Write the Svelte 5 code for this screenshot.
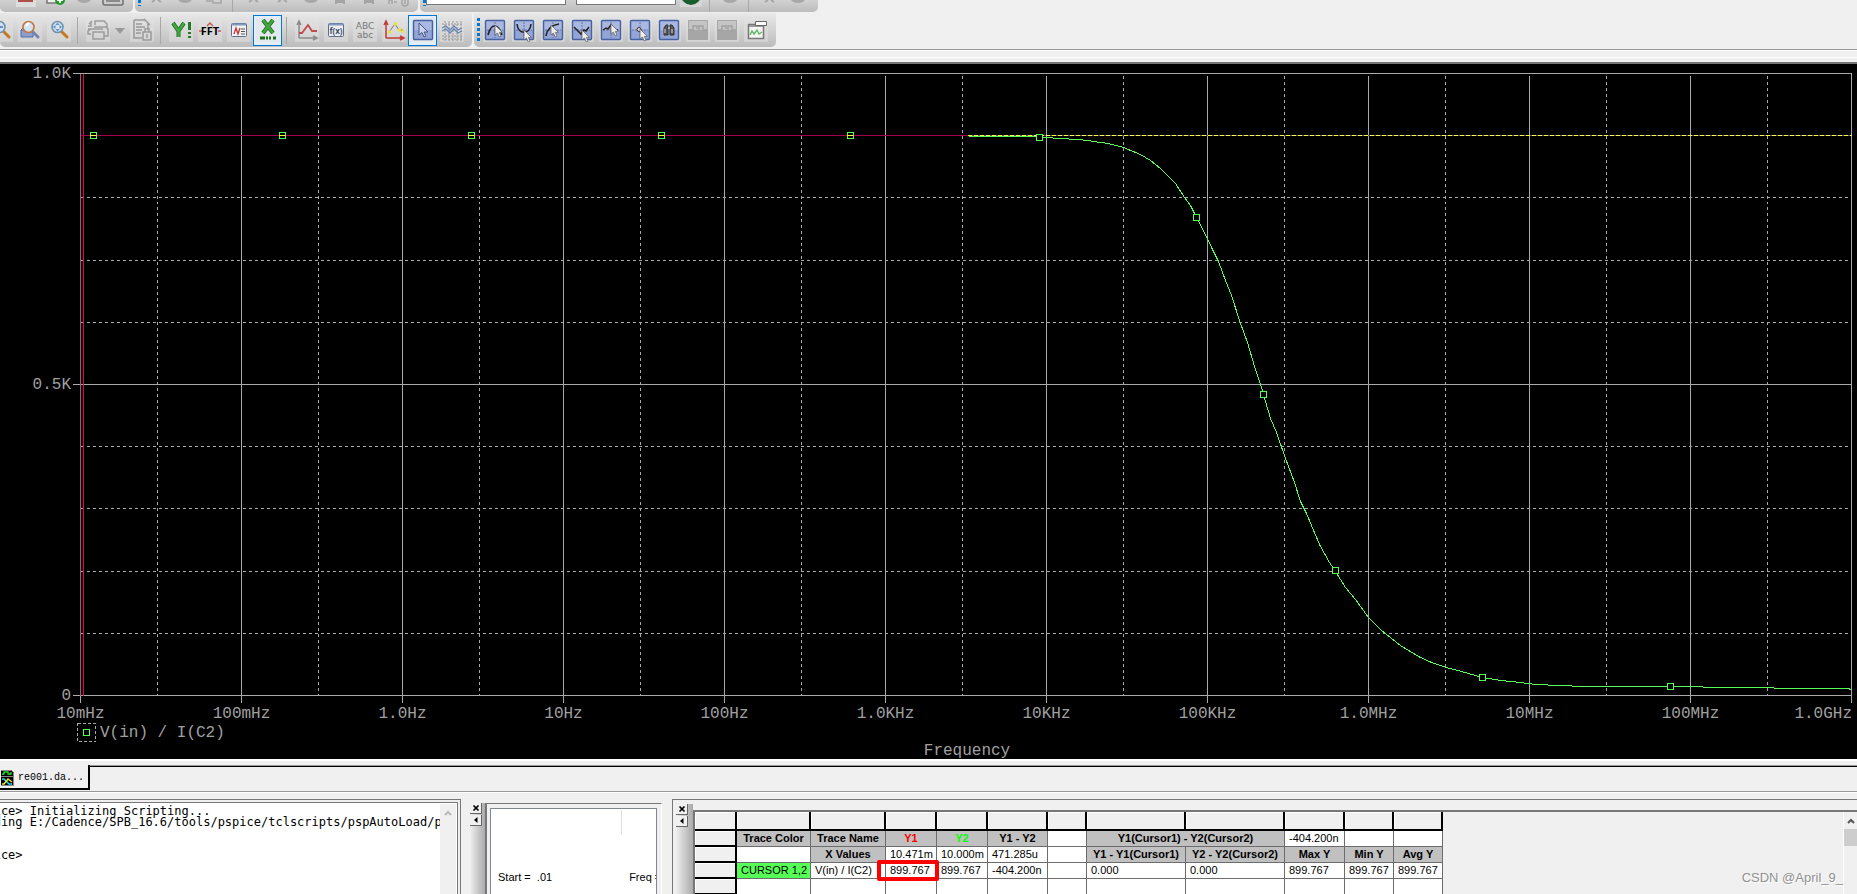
<script>
    // standard toolbar, only its lower edge is visible
    const fileTools = ['page', 'add', 'blob', 'device'];
    const editTools = ['bits', 'blob', 'pages', '|', 'bits', 'bits', 'blob', 'stamp', 'stamp', 'pair'];
    const runTools = ['run', '|', 'blob', '|', 'bits', 'blob'];

    const probeTools = [
        { icon: 'zoomout', label: 'Zoom out' },
        { icon: 'zoomarea', label: 'Zoom area' },
        { icon: 'zoomfit', label: 'Zoom fit' },
        { icon: '|' },
        { icon: 'print', label: 'Print', menu: true },
        { icon: 'report', label: 'Report' },
        { icon: '|' },
        { icon: 'logy', label: 'Log Y axis' },
        { icon: 'fft', label: 'Fourier' },
        { icon: 'perf', label: 'Performance analysis' },
        { icon: 'logx', label: 'Log X axis', active: true },
        { icon: '|' },
        { icon: 'trace', label: 'Add trace' },
        { icon: 'func', label: 'Evaluate measurement' },
        { icon: 'text', label: 'Text label' },
        { icon: 'points', label: 'Mark data points' },
        { icon: 'pointer', label: 'Toggle cursor', active: true },
        { icon: 'waves', label: 'Display waves' }
    ];
    const cursorTools = [
        { icon: 'peak', label: 'Cursor peak' },
        { icon: 'trough', label: 'Cursor trough' },
        { icon: 'slope', label: 'Cursor slope' },
        { icon: 'min', label: 'Cursor min' },
        { icon: 'max', label: 'Cursor max' },
        { icon: 'point', label: 'Cursor point' },
        { icon: 'search', label: 'Cursor search' },
        { icon: 'off', label: 'Next transition' },
        { icon: 'off', label: 'Previous transition' },
        { icon: 'mark', label: 'Mark label' }
    ];

    // plot geometry
    const left = 80.5, right = 1851.5, top = 73.5, bottom = 695.5;
    const decade = 161;
    const freqs = ['10mHz', '100mHz', '1.0Hz', '10Hz', '100Hz', '1.0KHz', '10KHz', '100KHz', '1.0MHz', '10MHz', '100MHz', '1.0GHz'];
    const minorY = [197.5, 260.5, 322.5, 446.5, 508.5, 571.5, 633.5];
    const curve = [
        [968, 136], [1034, 136], [1045, 137], [1060, 138], [1077, 139], [1087, 140], [1100, 142], [1108, 143], [1123, 147],
        [1140, 154], [1150, 160], [1160, 168], [1175, 183], [1184, 197], [1190, 205], [1196, 217], [1207, 238], [1212, 249],
        [1218, 261], [1225, 280], [1231, 295], [1240, 323], [1247, 342], [1254, 366], [1261, 387], [1263, 394], [1270, 418],
        [1276, 432], [1285, 458], [1294, 482], [1300, 501], [1306, 513], [1319, 544], [1329, 562], [1335, 571], [1345, 587],
        [1355, 599], [1368, 617], [1381, 630], [1400, 645], [1418, 656], [1431, 662], [1446, 667], [1461, 671], [1482, 677],
        [1501, 680], [1520, 682], [1535, 684], [1560, 685], [1583, 686], [1702, 686], [1703, 687], [1773, 687], [1774, 688],
        [1847, 688], [1851, 689]
    ];
    const markers = [
        [93, 135], [282, 135], [471, 135], [661, 135], [850, 135], [1039, 137],
        [1196, 217], [1263, 394], [1335, 570], [1482, 677], [1670, 686]
    ];
    const path = curve.map((p, i) => `${i === 0 ? 'M' : 'L'}${p[0] + 0.5},${p[1] + 0.5}`).join(' ');

    const colWidths = [42, 74, 75, 51, 51, 60, 39, 99, 99, 60, 49, 49];
</script>

{#snippet arrow(x, y)}
    <path transform="translate({x} {y})" d="M0 0V10L2.4 8L4.2 12L6 11.2L4.4 7.4H7.4Z" fill="#eee" stroke="#666" stroke-width=".8" />
{/snippet}

{#snippet tile()}
    <rect x="2.5" y="2.5" width="19" height="19" rx="1" fill="#93a4d6" stroke="#45619f" stroke-width="1.4" />
    <path d="M3.5 12V3.5H20.5V12Z" fill="#b9c4e8" opacity=".6" />
{/snippet}

{#snippet glyph(name)}
    <svg class="glyph" viewBox="0 0 24 24" aria-hidden="true">
        {#if name === 'zoomout' || name === 'zoomfit' || name === 'zoomarea'}
            {#if name === 'zoomarea'}
                <path d="M3 12H15V19H3Z" fill="#8c9fd3" stroke="#5068a8" />
                <path d="M3 12L6 9H9" fill="none" stroke="#5068a8" />
            {/if}
            <path d="M14 13L20 19" stroke={name === 'zoomarea' ? '#7684b4' : '#c87820'} stroke-width="3" stroke-linecap="round" />
            <circle cx="10.5" cy="9" r="5.5" fill="#d4e3f2" stroke={name === 'zoomarea' ? '#c07840' : '#7092ae'} stroke-width="1.6" />
            {#if name === 'zoomfit'}
                <path d="M10.5 4.500L12.500 7H8.500ZM10.500 13.500L12.500 11H8.500ZM6 9L8.500 7V11ZM15 9L12.500 7V11Z" fill="#5f93c7" />
            {:else if name === 'zoomarea'}
                <path d="M8 8L11 5" stroke="#fff" stroke-width="2" />
            {:else}
                <path d="M7 9H14" stroke="#5f93c7" stroke-width="2" />
            {/if}
        {:else if name === 'print'}
            <g fill="none" stroke="#9c9c9c" stroke-width="1.5">
                <path d="M2 8H5V4M3 6L6 3M9 7V3H18L21 6V9H8" />
                <path d="M20 9L22 11V18H18M5 11L2 13V16H5M5 11H17M7 14H18V21H7ZM2 11H5" />
            </g>
        {:else if name === 'report'}
            <g fill="none" stroke="#999" stroke-width="1.5">
                <path d="M4 2H15L18 5V11M4 2V20H12M6 6H12M6 9H15M6 12H12M6 15H11M14 1L20 7" />
                <path d="M13 14V22H21V14ZM15 14V11H19V14M17 16V20" />
            </g>
        {:else if name === 'logy'}
            <path d="M4 5L9.500 13V19M15 5L9.500 13" fill="none" stroke="#246a24" stroke-width="4" />
            <path d="M4 5L9.500 13V19M15 5L9.500 13" fill="none" stroke="#3fa83f" stroke-width="2.400" />
            <path d="M20.500 4V12M20.500 14V16M20.500 18V20" stroke="#257a25" stroke-width="3" />
        {:else if name === 'fft'}
            <path d="M1 13H4M20 13H23M9 8L12 5L15 8" fill="none" stroke="#c85a5a" stroke-width="1.500" />
            <text class="fft" x="12" y="17" text-anchor="middle">FFT</text>
        {:else if name === 'perf'}
            <rect x="4.500" y="5.500" width="15" height="13" rx="1" fill="#f2f2f2" stroke="#5c6f8e" />
            <path d="M5 6.500H19" stroke="#8298be" stroke-width="2" />
            <path d="M7 16L9 10L11 16L13 10" fill="none" stroke="#bd3434" stroke-width="1.300" />
            <path d="M14 11H18M14 13.500H18M14 16H18" stroke="#555" />
        {:else if name === 'logx'}
            <path d="M7 2L17 15M17 2L7 15" stroke="#246a24" stroke-width="4.200" />
            <path d="M7 2L17 15M17 2L7 15" stroke="#3fa83f" stroke-width="2.600" />
            <path d="M4 20H9M10 20H12M13 20H15M17 20H20" stroke="#1d6f1d" stroke-width="3" />
        {:else if name === 'trace' || name === 'points'}
            {#if name === 'trace'}
                <path d="M4 20V4M4 20H21M2 7L4 3L6 7M18 18L22 20L18 22" fill="none" stroke="#8a8a8a" stroke-width="1.500" />
                <path d="M4 15H7L13 7L17 13H22" fill="none" stroke="#c14b4b" stroke-width="1.800" />
            {:else}
                <path d="M4 20V4M4 20H21M2 7L4 3L6 7M18 18L22 20L18 22" fill="none" stroke="#c23a3a" stroke-width="1.500" />
                <path d="M7 14L13 6L17 12H21" fill="none" stroke="#777" />
                <path d="M6 14H9M12 6H15M16 12H19M20 13H22" stroke="#eee22c" stroke-width="3" />
            {/if}
        {:else if name === 'func'}
            <rect x="4.500" y="5.500" width="15" height="13" rx="1" fill="#eee" stroke="#5c6f8e" />
            <path d="M5 6.500H19" stroke="#8298be" stroke-width="2" />
            <text class="fx" x="12" y="16" text-anchor="middle">f(x)</text>
        {:else if name === 'text'}
            <text class="abc" x="12" y="11" text-anchor="middle">ABC</text>
            <text class="abc" x="12" y="20" text-anchor="middle">abc</text>
        {:else if name === 'waves'}
            <path d="M2 6H22M2 18H22M2 21H22M5 3V23M9 3V23M13 3V23M17 3V23M21 3V23" stroke="#999" stroke-width="1" stroke-dasharray="2 1" />
            <path d="M2 10L6 8L10 12L14 8L18 12L22 10M2 13L6 11L10 15L14 11L18 15L22 13" fill="none" stroke="#6582b5" stroke-width="1.300" />
        {:else if name === 'pointer'}
            {@render tile()}
            <path d="M8 5V17L11 14.500L13 19L15 18L13 14H17Z" fill="#c9d2ef" stroke="#485782" />
        {:else if name === 'off'}
            <path d="M2 2H22V22H2Z" fill="#c4c4c4" />
            <path d="M2 12H22V22H2Z" fill="#a6a6a6" />
            <path d="M2.500 2.500H21.500V21.500H2.500Z" fill="none" stroke="#a6a6a6" />
            <path d="M3 12H7V8H11V11M13 12V8H17V12H21" fill="none" stroke="#a0a0a0" stroke-width="1.400" />
        {:else if name === 'mark'}
            <path d="M4.500 6.500H19.500V20.500H4.500Z" fill="#f5f5f5" stroke="#777" stroke-width="1.500" />
            <path d="M5 8H19" stroke="#999" stroke-width="2" />
            <path d="M6 17L8 13L10 16L13 12L15 16L18 14" fill="none" stroke="#61b561" stroke-width="1.400" />
            <path d="M11.500 3.500H22.500V7.500H11.500Z" fill="#fff" stroke="#666" />
        {:else}
            {@render tile()}
            {#if name !== 'search'}
                <path d="M4 12H20M12 4V20" stroke="#56648d" stroke-width=".8" stroke-dasharray="2 1" />
            {/if}
            {#if name === 'peak'}
                <path d="M5 17C8 5 15 5 19 17" fill="none" stroke="#222" stroke-width="1.600" />
                {@render arrow(12, 7)}
            {:else if name === 'trough'}
                <path d="M5 6C6 17 18 17 19 6" fill="none" stroke="#222" stroke-width="1.600" />
                {@render arrow(12, 12)}
            {:else if name === 'slope'}
                <path d="M5 18C6 10 11 7 18 6" fill="none" stroke="#222" stroke-width="1.600" />
                {@render arrow(10, 7)}
            {:else if name === 'min'}
                <path d="M4 9L11 16L14 12L16 13L19 9" fill="none" stroke="#222" stroke-width="1.600" />
                {@render arrow(12, 12)}
            {:else if name === 'max'}
                <path d="M4 12L7 10L9 11L12 7L17 12H19" fill="none" stroke="#222" stroke-width="1.500" />
                {@render arrow(12, 6)}
            {:else if name === 'point'}
                <circle cx="11" cy="11.500" r="2" fill="#ddd" stroke="#333" />
                {@render arrow(12, 11)}
            {:else}
                <path d="M7 17V10L9 7H11V17ZM13 17V7H15L17 10V17Z" fill="#555" stroke="#333" />
                <path d="M11 10H13M8 11V15M15 11V15" stroke="#ddd" />
            {/if}
        {/if}
    </svg>
{/snippet}

{#snippet stub(name)}
    {#if name === '|'}
        <span class="sep"></span>
    {:else}
        <button class="tool" aria-label={name}>
            <svg class="stub" viewBox="0 0 24 12" aria-hidden="true">
                {#if name === 'page'}
                    <path d="M2 0H22V7H2Z" fill="#ddd" /><path d="M4 1H19" stroke="#ad5148" stroke-width="2" />
                {:else if name === 'add'}
                    <path d="M4 0V3H17V0" fill="#eee" stroke="#777" stroke-width="1.500" />
                    <circle cx="17" cy="0" r="5" fill="#1b9b24" /><path d="M14 0H20M17 0V3" stroke="#fff" stroke-width="2" />
                {:else if name === 'device'}
                    <path d="M2 0V3Q2 5 4 5H20Q22 5 22 3V0" fill="#ccc" stroke="#707070" stroke-width="1.500" />
                    <path d="M5 1H19" stroke="#777" stroke-width="1.500" />
                {:else if name === 'run'}
                    <rect x="1" y="0" width="22" height="7" fill="#d6d6d6" />
                    <circle cx="12" cy="-5" r="10" fill="#17602d" />
                {:else if name === 'blob'}
                    <ellipse cx="12" cy="-1" rx="7" ry="4" fill="#a8a8a8" />
                {:else if name === 'pages'}
                    <path d="M5 0V1H11V3H19V0" fill="none" stroke="#a5a5a5" stroke-width="1.500" />
                {:else if name === 'stamp'}
                    <path d="M8 4V0H16V4M8 2H16" fill="none" stroke="#a5a5a5" stroke-width="2" />
                {:else if name === 'pair'}
                    <path d="M3 4V0H6V4M8 2H11M16 0V3Q16 6 19 6T22 3V0M19 0V4" fill="none" stroke="#a5a5a5" stroke-width="1.500" />
                {:else}
                    <path d="M8 2L11 0M14 0L17 2" stroke="#a5a5a5" stroke-width="2" />
                {/if}
            </svg>
        </button>
    {/if}
{/snippet}

{#snippet toolButton(tool)}
    {#if tool.icon === '|'}
        <span class="sep"></span>
    {:else}
        <button class="tool" class:active={tool.active} aria-label={tool.label}>{@render glyph(tool.icon)}</button>
        {#if tool.menu}
            <button class="drop" aria-label="Print options"><svg viewBox="0 0 10 6" aria-hidden="true"><path d="M0 0H10L5 6Z" fill="#999" /></svg></button>
        {/if}
    {/if}
{/snippet}

{#snippet grip()}
    <div class="grip">
        <button aria-label="Close pane"><svg viewBox="0 0 8 8" aria-hidden="true"><path d="M1.500 1.500L6.500 6.500M6.500 1.500L1.500 6.500" stroke="#000" stroke-width="1.700" /></svg></button>
        <button aria-label="Collapse pane"><svg viewBox="0 0 8 8" aria-hidden="true"><path d="M5.500 1V7L2 4Z" /></svg></button>
    </div>
{/snippet}

<div class="app">
    <header>
        <div class="bars upper">
            <div class="bar file">
                {#each fileTools as t}{@render stub(t)}{/each}
            </div>
            <div class="bar edit">
                <span class="dots"></span>
                {#each editTools as t}{@render stub(t)}{/each}
            </div>
            <div class="bar run">
                <span class="dots"></span>
                <input class="profile" aria-label="Simulation profile" />
                <input class="target" aria-label="Run to time" />
                {#each runTools as t}{@render stub(t)}{/each}
            </div>
        </div>
        <div class="bars">
            <div class="bar probe">
                {#each probeTools as tool}{@render toolButton(tool)}{/each}
            </div>
            <div class="bar cursors">
                <span class="dots"></span>
                {#each cursorTools as tool}{@render toolButton(tool)}{/each}
            </div>
        </div>
    </header>
    <div class="rail"></div>

    <main>
        <svg class="plot" viewBox="0 64 1857 695" role="img" aria-label="V(in) / I(C2) against frequency">
            <g class="grid">
                {#each minorY as y}
                    <line class="dash" x1={left} x2={right} y1={y} y2={y} />
                {/each}
                {#each freqs as f, i}
                    {#if i < freqs.length - 1}
                        <line class="dash" x1={left + i * decade + 77} x2={left + i * decade + 77} y1={top + 2} y2={bottom} />
                    {/if}
                    <line x1={left + i * decade} x2={left + i * decade} y1={i === 11 ? top : top + 2} y2={bottom + 7} />
                {/each}
                <line x1="73" x2={right} y1={top} y2={top} />
                <line x1="73" x2={right} y1="384.500" y2="384.500" />
                <line x1="73" x2={right} y1={bottom} y2={bottom} />
            </g>
            <g class="labels">
                {#each freqs as f, i}
                    <text x={i === 11 ? 1852 : left + i * decade} y="718" text-anchor={i === 11 ? 'end' : 'middle'}>{f}</text>
                {/each}
                <text x="71" y="78" text-anchor="end">1.0K</text>
                <text x="71" y="389" text-anchor="end">0.5K</text>
                <text x="71" y="700" text-anchor="end">0</text>
                <text x="100" y="737">V(in) / I(C2)</text>
                <text x="967" y="755" text-anchor="middle">Frequency</text>
            </g>
            <g class="lines">
                <line x1={left} x2={left} y1={top} y2={bottom} stroke="#a64ca6" />
                <line x1="83.500" x2="83.500" y1={top} y2={bottom} stroke="#e01010" />
                <line x1={left} x2="968" y1="135.500" y2="135.500" stroke="#a8004f" />
                <path d={path} stroke="#55ff55" />
                <line x1="968" x2={right} y1="135.500" y2="135.500" stroke="#5757a5" />
                <line x1="968" x2={right} y1="135.500" y2="135.500" stroke="#ffff30" stroke-dasharray="4 2" />
                {#each markers as [x, y]}
                    <rect x={x - 2.5} y={y - 2.5} width="6" height="6" stroke="#55ff55" fill={y === 135 ? 'none' : '#000'} />
                    {#if y === 135}
                        <line x1={x - 3} x2={x + 3} y1="135.500" y2="135.500" stroke="#ffff30" />
                    {/if}
                {/each}
                <rect x="77.500" y="723.500" width="18" height="18" stroke="#aaa" stroke-dasharray="3 2" />
                <rect x="83.500" y="729.500" width="6" height="6" stroke="#55ff55" />
            </g>
        </svg>
    </main>

    <nav class="tabs">
        <button class="tab">
            <svg viewBox="0 0 13 16" aria-hidden="true">
                <path d="M0 0H10L13 3V16H0Z" fill="#000" />
                <path d="M0 .5H10M12.500 3V16M0 6.500H12M0 15.500H12" stroke="#888" />
                <path d="M1 4H3V2H7V4H10V2" fill="none" stroke="#20e020" stroke-width="1.300" />
                <path d="M1 9H3L8 14H11" fill="none" stroke="#28d8ee" stroke-width="1.500" />
                <path d="M1 14H3L7 9L11 12" fill="none" stroke="#f1e928" stroke-width="1.500" />
            </svg>
            re001.da...
        </button>
        <div class="fill"></div>
    </nav>

    <div class="docks">
        <section class="console">
            <div class="inner">
                <pre>PSpice&gt; Initializing Scripting...
Loading E:/Cadence/SPB_16.6/tools/pspice/tclscripts/pspAutoLoad/psp

&#32;
PSpice&gt;</pre>
                <div class="scroll">
                    <svg viewBox="0 0 8 6" aria-hidden="true"><path d="M1 5L4 2L7 5" fill="none" stroke="#bbb" stroke-width="2" /></svg>
                </div>
            </div>
        </section>

        <section class="status">
            {@render grip()}
            <div class="frame">
                <div class="sheet">
                    <span class="rule"></span>
                    <p><span>Start =&nbsp; .01</span><span>Freq =</span></p>
                </div>
            </div>
        </section>

        <section class="probe-cursor">
            {@render grip()}
            <div class="tablebox">
                <div class="tablewrap">
                    <table>
                        <colgroup>
                            {#each colWidths as w}<col style="width: {w}px" />{/each}
                        </colgroup>
                        <thead>
                            <tr>{#each colWidths as w}<td class="btn"></td>{/each}</tr>
                        </thead>
                        <tbody>
                            <tr>
                                <td class="btn"></td>
                                <th>Trace Color</th><th>Trace Name</th>
                                <th class="y1">Y1</th><th class="y2">Y2</th><th>Y1 - Y2</th>
                                <td></td>
                                <th colspan="2">Y1(Cursor1) - Y2(Cursor2)</th>
                                <td>-404.200n</td><td></td><td></td>
                            </tr>
                            <tr>
                                <td class="btn"></td>
                                <td></td><th>X Values</th>
                                <td>10.471m</td><td>10.000m</td><td>471.285u</td>
                                <td></td>
                                <th>Y1 - Y1(Cursor1)</th><th>Y2 - Y2(Cursor2)</th>
                                <th>Max Y</th><th>Min Y</th><th>Avg Y</th>
                            </tr>
                            <tr>
                                <td class="btn"></td>
                                <td class="color">CURSOR 1,2</td><td>V(in) / I(C2)</td>
                                <td class="hit">899.767</td><td>899.767</td><td>-404.200n</td>
                                <td></td>
                                <td>0.000</td><td>0.000</td>
                                <td>899.767</td><td>899.767</td><td>899.767</td>
                            </tr>
                            <tr>
                                <td class="btn"></td>
                                {#each colWidths.slice(1) as w}<td></td>{/each}
                            </tr>
                        </tbody>
                    </table>
                </div>
                <div class="scroll live">
                    <svg viewBox="0 0 8 6" aria-hidden="true"><path d="M1 5L4 2L7 5" fill="none" stroke="#555" stroke-width="2" /></svg>
                    <span class="thumb"></span>
                </div>
            </div>
            <span class="watermark">CSDN @April_9_</span>
        </section>
    </div>
</div>

<style>
    :global(body) {
        margin: 0;
        background: #f0f0f0;
    }
    .app {
        display: flex;
        flex-direction: column;
        height: 100vh;
        overflow: hidden;
        background: #f0f0f0;
        font-family: "Liberation Sans", Arial, sans-serif;
        font-size: 11px;
        color: #000;
    }
    button {
        padding: 0;
        border: 0;
        background: none;
        color: inherit;
        font: inherit;
    }

    /* toolbars */
    header {
        display: flex;
        flex-direction: column;
        gap: 1px;
        padding-bottom: 2px;
        border-bottom: 1px solid #999;
    }
    .bars {
        display: flex;
        gap: 2px;
        height: 34px;
    }
    .bar {
        display: flex;
        align-items: center;
        box-sizing: border-box;
        border-radius: 0 0 5px 5px;
        background: linear-gradient(#e8e8e8, #bcbcbc);
        overflow: hidden;
    }
    .upper {
        height: 12px;
    }
    .upper .bar {
        align-items: flex-start;
        background: linear-gradient(#d2d2d2, #bcbcbc);
    }
    .tool {
        display: flex;
        flex: none;
        align-items: center;
        justify-content: center;
        box-sizing: border-box;
        width: 29px;
        height: 31px;
    }
    .tool.active {
        border: 1px solid #0078d7;
        background: #e4eef7;
    }
    .upper .tool {
        height: 12px;
    }
    .glyph {
        width: 24px;
        height: 24px;
        background: rgb(225 225 225 / 50%);
    }
    .stub {
        width: 24px;
        height: 12px;
    }
    .drop {
        flex: none;
        width: 15px;
    }
    .drop svg {
        width: 10px;
        height: 6px;
    }
    .sep {
        flex: none;
        width: 1px;
        height: 27px;
        margin: 0 5px 0 4px;
        background: #a8a8a8;
    }
    .dots {
        flex: none;
        width: 3px;
        height: 24px;
        margin-left: 3px;
        background: repeating-linear-gradient(#0078d7 0 3px, transparent 3px 5px);
    }
    .upper .dots {
        height: 6px;
    }
    .file {
        width: 133px;
        padding-left: 11px;
    }
    .edit {
        width: 283px;
    }
    .run {
        width: 398px;
    }
    .bar input {
        box-sizing: border-box;
        height: 5px;
        padding: 0;
        border: 1px solid #777;
        border-top: 0;
        background: #fff;
    }
    .profile {
        width: 140px;
        margin-right: 10px;
    }
    .target {
        width: 100px;
    }
    .probe {
        width: 472px;
    }
    .probe > :global(:first-child) {
        margin-left: -14px;
    }
    .cursors {
        width: 302px;
    }
    .fft {
        font: 700 11px "Open Sans", sans-serif;
    }
    .fx {
        font: 700 8px "Open Sans", sans-serif;
        fill: #3c4f6d;
    }
    .abc {
        font: 9px "DejaVu Sans", sans-serif;
        fill: #777;
    }
    .rail {
        box-sizing: border-box;
        height: 14px;
        border-top: 1px solid #fff;
        border-bottom: 2px solid #777;
        background: linear-gradient(#f0f0f0 6px, #fff 6px 7px, #f0f0f0 7px);
    }

    /* plot */
    main {
        border-bottom: 2px solid #fff;
        background: #000;
    }
    .plot {
        display: block;
        width: 100%;
    }
    .grid,
    .lines {
        shape-rendering: crispEdges;
        fill: none;
    }
    .grid {
        stroke: #aaa;
    }
    .dash {
        stroke-dasharray: 3 3;
    }
    .labels {
        font: 16px "Liberation Mono", "Courier New", monospace;
        fill: #a0a0a0;
    }

    /* document tabs */
    .tabs {
        display: flex;
        height: 31px;
        box-sizing: border-box;
        padding-top: 4px;
        border-bottom: 1px solid #999;
    }
    .tab {
        display: flex;
        align-items: center;
        gap: 4px;
        box-sizing: border-box;
        width: 90px;
        height: 25px;
        padding: 2px 0 0 1px;
        border-right: 2px solid #000;
        border-bottom: 2px solid #000;
        font: 10px "Liberation Mono", monospace;
    }
    .tab svg {
        width: 13px;
        height: 16px;
    }
    .fill {
        flex: 1;
        height: 2px;
        background: linear-gradient(#999 1px, #000 1px);
    }

    /* docked panes */
    .docks {
        display: flex;
        flex: 1;
        min-height: 0;
        padding-top: 6px;
        border-top: 1px solid #fff;
    }
    .console {
        flex: none;
        box-sizing: border-box;
        width: 461px;
        padding: 2px 2px 0 0;
        border: solid #777;
        border-width: 1px 1px 0 0;
    }
    .inner {
        display: flex;
        box-sizing: border-box;
        height: 100%;
        border: solid #777;
        border-width: 1px 1px 0 0;
        background: #fff;
        overflow: hidden;
    }
    pre {
        flex: 1;
        min-width: 0;
        margin: 0 0 0 -28px;
        padding-top: 3px;
        overflow: hidden;
        font: 12px/11px "DejaVu Sans Mono", monospace;
    }
    .scroll {
        display: flex;
        flex: none;
        flex-direction: column;
        align-items: center;
        gap: 5px;
        width: 16px;
        margin: 1px 1px 0 0;
        padding-top: 6px;
        background: #f0f0f0;
    }
    .scroll svg {
        width: 8px;
        height: 6px;
    }
    .status {
        display: flex;
        flex: none;
        box-sizing: border-box;
        width: 201px;
        padding: 4px 0 0 9px;
    }
    .grip {
        display: flex;
        flex-direction: column;
        flex: none;
        gap: 1px;
        width: 15px;
        background: linear-gradient(90deg, #eee, #aaa);
    }
    .grip button {
        display: flex;
        align-items: center;
        justify-content: center;
        box-sizing: border-box;
        width: 12px;
        height: 11px;
        border: solid #666;
        border-width: 0 1px 1px 0;
        background: #f0f0f0;
    }
    .grip svg {
        width: 8px;
        height: 8px;
    }
    .frame {
        flex: 1;
        min-width: 0;
        padding: 4px 4px 0 3px;
        border: solid #777;
        border-width: 1px 0 0 2px;
        border-right: 1px solid #fff;
    }
    .sheet {
        display: flex;
        flex-direction: column;
        height: 100%;
        border: solid #7f8690;
        border-width: 1px 1px 0 1px;
        background: #fff;
        overflow: hidden;
    }
    .rule {
        width: 1px;
        height: 24px;
        margin: 1px 34px 0 auto;
        background: #ddd;
    }
    .sheet p {
        display: flex;
        gap: 77px;
        margin: 36px 0 0;
        padding-left: 7px;
        line-height: 14px;
        white-space: nowrap;
    }
    .probe-cursor {
        position: relative;
        display: flex;
        flex: 1;
        min-width: 0;
        margin-left: 10px;
        padding-left: 3px;
        border: solid #777;
        border-width: 1px 0 0 1px;
    }
    .probe-cursor .grip {
        width: 17px;
        margin-top: 4px;
    }
    .tablebox {
        display: flex;
        flex: 1;
        min-width: 0;
        margin-top: 10px;
        border: solid #777;
        border-width: 2px 0 0 2px;
    }
    .tablewrap {
        flex: 1;
        min-width: 0;
        overflow: hidden;
    }
    table {
        width: 748px;
        table-layout: fixed;
        border-collapse: separate;
        border-spacing: 0;
        background: #fff;
    }
    tr {
        height: 16px;
    }
    thead tr {
        height: 19px;
    }
    td,
    th {
        box-sizing: border-box;
        height: 16px;
        padding: 0 0 0 4px;
        border: solid #6c6c6c;
        border-width: 0 1px 1px 0;
        line-height: 15px;
        white-space: nowrap;
    }
    th {
        padding: 0;
        background: #c0c0c0;
        text-align: center;
    }
    .btn {
        border-right: 2px solid #000;
        border-bottom: 2px solid #000;
        background: #f0f0f0;
        box-shadow: inset 1px 1px #fff;
    }
    .y1 {
        color: #f00;
    }
    .y2 {
        color: #0f0;
    }
    .color {
        background: #55ff55;
    }
    .hit {
        position: relative;
    }
    /* red callout drawn around the measured value */
    .hit::after {
        content: "";
        position: absolute;
        inset: -3px -3px -3px -9px;
        border: 4px solid #f00;
        border-radius: 2px;
    }
    .live {
        width: 13px;
        margin: 0;
        border-left: 1px solid #fff;
    }
    .thumb {
        width: 13px;
        height: 17px;
        background: #cdcdcd;
    }
    .watermark {
        position: absolute;
        right: 14px;
        bottom: 7px;
        color: #909090;
        font-size: 13px;
        line-height: 18px;
        text-shadow: 1px 1px #fff;
    }
</style>
